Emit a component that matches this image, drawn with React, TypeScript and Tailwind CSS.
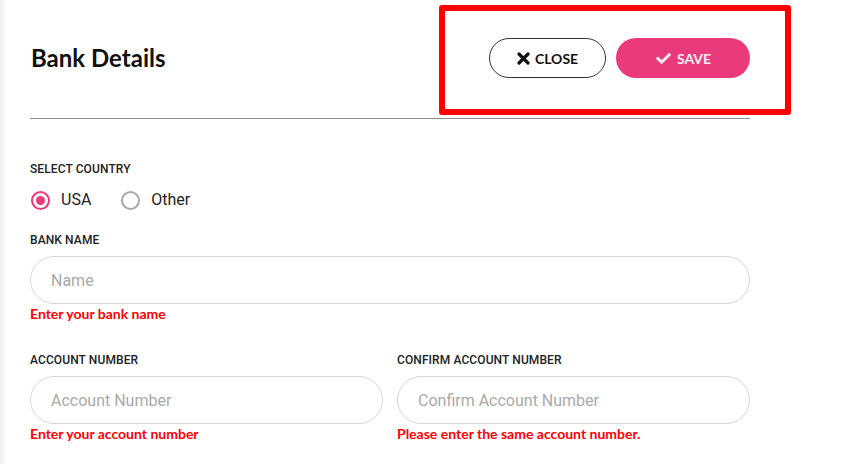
import { FaCheck } from "react-icons/fa";

// ---------------------------------------------------------------------------
// Small pieces
// ---------------------------------------------------------------------------

const lato = "font-['Lato','Liberation_Sans',sans-serif]";
const roboto = "font-['Roboto','Liberation_Sans',sans-serif]";

function FieldLabel({ children, className = "" }: { children: React.ReactNode; className?: string }) {
  return (
    <div className={`${roboto} h-4 text-[12px] leading-4 font-medium tracking-[0.1px] text-[#222] ${className}`}>
      {children}
    </div>
  );
}

function TextInput({ placeholder }: { placeholder: string }) {
  return (
    <input
      type="text"
      placeholder={placeholder}
      className={`${roboto} h-12 w-full rounded-full border border-[#d6d6d6] bg-white px-5 text-[16px] text-[#333] outline-none placeholder:text-[#a9a9a9]`}
    />
  );
}

function ErrorText({ children }: { children: React.ReactNode }) {
  return <div className={`${lato} h-5 text-[14px] leading-5 font-bold text-[#ff0000]`}>{children}</div>;
}

function Radio({ label, checked }: { label: string; checked?: boolean }) {
  return (
    <label className="flex items-center gap-[11px]">
      <span
        className={`flex h-[19px] w-[19px] items-center justify-center rounded-full border-2 ${
          checked ? "border-[#e93a7c]" : "border-[#a8a8a8]"
        }`}
      >
        {checked && <span className="h-[9px] w-[9px] rounded-full bg-[#e93a7c]" />}
      </span>
      <span className={`${roboto} text-[16px] text-[#222]`}>{label}</span>
    </label>
  );
}

function HeavyX() {
  return (
    <svg viewBox="0 0 13 13" className="h-[13px] w-[13px]" aria-hidden="true">
      <path d="M2 2 L11 11 M11 2 L2 11" stroke="currentColor" strokeWidth="3.2" strokeLinecap="round" fill="none" />
    </svg>
  );
}

// ---------------------------------------------------------------------------
// Page
// ---------------------------------------------------------------------------

export default function App() {
  return (
    <div className="relative flex h-[464px] w-[853px] overflow-hidden bg-white">
      {/* faint edge of the modal shadow */}
      <div className="w-[6px] shrink-0 bg-gradient-to-r from-[#ededed] to-white" />

      <div className="w-[720px] shrink-0 pl-[24px] box-content">
        {/* Header */}
        <div className="flex h-10 items-center justify-between mt-[38px]">
          <h1 className={`${lato} pl-px text-[24px] font-bold text-[#111]`}>Bank Details</h1>
          <div className="flex items-center gap-[10px]">
            <button
              type="button"
              className={`${lato} flex h-10 w-[117px] items-center justify-center gap-[5px] rounded-full border border-[#333] bg-white text-[14px] font-bold text-[#111]`}
            >
              <HeavyX />
              CLOSE
            </button>
            <button
              type="button"
              className={`${lato} flex h-10 w-[134px] items-center justify-center gap-[5px] rounded-full bg-[#ea3a7c] text-[14px] font-bold text-[#fdf0f5]`}
            >
              <FaCheck className="h-[15px] w-[17px]" />
              SAVE
            </button>
          </div>
        </div>

        <div className="mt-10 h-px bg-[#8c8c8c]" />

        {/* Country */}
        <FieldLabel className="mt-[42px]">SELECT COUNTRY</FieldLabel>
        <div className="mt-[11px] flex h-6 items-center gap-[30px] pl-px">
          <Radio label="USA" checked />
          <Radio label="Other" />
        </div>

        {/* Bank name */}
        <FieldLabel className="mt-5">BANK NAME</FieldLabel>
        <div className="mt-2">
          <TextInput placeholder="Name" />
        </div>
        <ErrorText>Enter your bank name</ErrorText>

        {/* Account numbers */}
        <div className="mt-[28px] grid grid-cols-2 gap-x-[14px]">
          <div>
            <FieldLabel>ACCOUNT NUMBER</FieldLabel>
            <div className="mt-2">
              <TextInput placeholder="Account Number" />
            </div>
            <ErrorText>Enter your account number</ErrorText>
          </div>
          <div>
            <FieldLabel>CONFIRM ACCOUNT NUMBER</FieldLabel>
            <div className="mt-2">
              <TextInput placeholder="Confirm Account Number" />
            </div>
            <ErrorText>Please enter the same account number.</ErrorText>
          </div>
        </div>
      </div>

      {/* Annotation highlight over the action buttons */}
      <div className="pointer-events-none absolute left-[439px] top-[5px] h-[110px] w-[352px] rounded-[3px] border-[6px] border-[#ff0000]" />
    </div>
  );
}
